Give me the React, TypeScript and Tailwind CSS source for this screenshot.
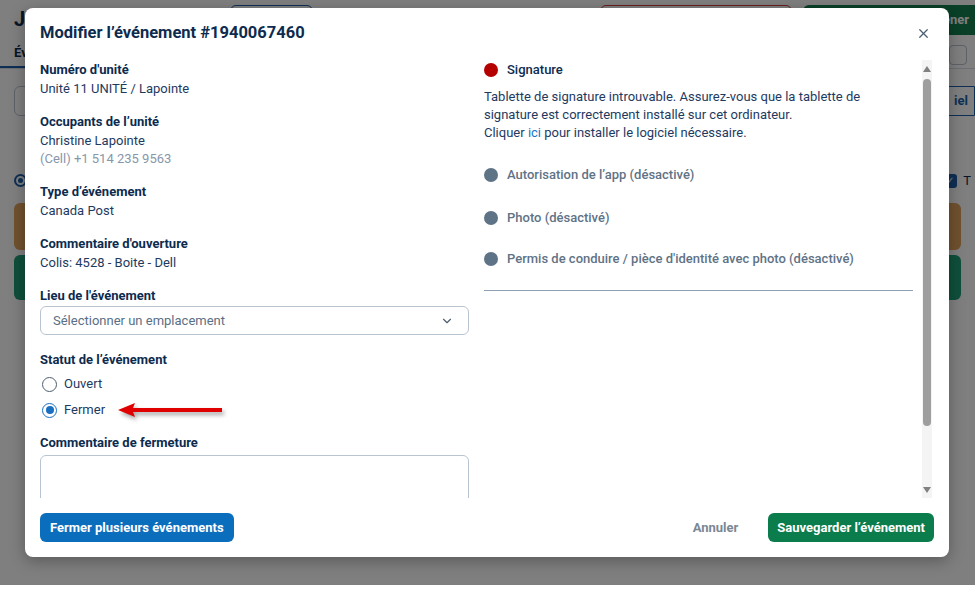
import { X, ChevronDown } from 'lucide-react';

function Field({ label, children }: { label: string; children: React.ReactNode }) {
    return (
        <div className="mb-[14px]">
            <div className="text-[13px] font-bold leading-[19px] text-[#0d2b4e]">{label}</div>
            {children}
        </div>
    );
}

function Radio({ label, checked }: { label: string; checked?: boolean }) {
    return (
        <div className="flex h-[26px] items-center">
            <span
                className={
                    checked
                        ? 'ml-[2px] flex h-[15px] w-[15px] items-center justify-center rounded-full border-[1.5px] border-[#1a6fc0]'
                        : 'ml-[2px] h-[15px] w-[15px] rounded-full border-[1.5px] border-[#4d5e70]'
                }
            >
                {checked && <span className="h-[8px] w-[8px] rounded-full bg-[#1a6fc0]" />}
            </span>
            <span className="ml-[7px] text-[13px] text-[#1e3a5f]">{label}</span>
            {checked && (
                <svg width="106" height="16" viewBox="0 0 106 16" className="ml-[13px] drop-shadow-[2px_3px_2px_rgba(0,0,0,0.35)]">
                    <path d="M0 8 L17 1 L15 6 L104 6 L104 10 L15 10 L17 15 Z" fill="#e00000" />
                </svg>
            )}
        </div>
    );
}

function Step({ label, color, text, className }: { label: string; color: string; text: string; className?: string }) {
    return (
        <div className={`flex h-[20px] items-center ${className ?? ''}`}>
            <span className={`h-[14px] w-[14px] rounded-full ${color}`} />
            <span className={`ml-[9px] text-[13px] font-medium ${text}`}>{label}</span>
        </div>
    );
}

function BackgroundPage() {
    return (
        <div className="flex h-[585px] flex-col">
            <div className="flex h-[42px] items-start pt-[5px] pl-[14px]">
                <h1 className="w-[216px] text-[20px] font-bold leading-[28px] text-[#0d2b4e]">J</h1>
                <div className="h-[30px] w-[83px] rounded-md border border-[#1d5fa8]" />
                <div className="flex-1" />
                <div className="h-[30px] w-[192px] rounded-md border border-[#d33a3a]" />
                <div className="ml-[11px] flex h-[30px] w-[172px] items-center overflow-hidden rounded-l-md bg-[#12804e] pl-[140px] text-[13px] font-bold whitespace-nowrap text-white">
                    éner
                </div>
            </div>
            <div className="flex h-[27px] items-end border-b border-[#d6dde5]">
                <div className="border-b-2 border-[#1d5fa8] pb-[4px] pl-[14px] pr-[10px] text-[13px] font-bold text-[#0d2b4e]">Év</div>
                <div className="flex-1" />
                <div className="mr-[8px] mb-[3px] h-[20px] w-[18px] rounded border border-[#b8c4d0]" />
            </div>
            <div className="flex items-center px-[14px] pt-[17px]">
                <div className="h-[30px] w-[220px] rounded-md border border-[#b8c4d0]" />
                <div className="flex-1" />
                <div className="mr-[-14px] flex h-[30px] w-[40px] items-center justify-end rounded-l-md border border-[#1d5fa8] pr-[6px] text-[13px] font-bold text-[#1d5fa8]">
                    iel
                </div>
            </div>
            <div className="flex items-center px-[14px] pt-[55px]">
                <span className="flex h-[13px] w-[13px] items-center justify-center rounded-full border-2 border-[#1d5fa8]">
                    <span className="h-[5px] w-[5px] rounded-full bg-[#1d5fa8]" />
                </span>
                <div className="flex-1" />
                <span className="mr-[6px] flex h-[14px] w-[14px] items-center justify-center rounded-[3px] bg-[#1d5fa8] text-[10px] text-white">✓</span>
                <span className="mr-[-10px] text-[13px] text-[#0d2b4e]">T</span>
            </div>
            <div className="mx-[14px] mt-[12px] h-[47px] rounded-md bg-[#e0a35c]" />
            <div className="mx-[14px] mt-[5px] h-[45px] rounded-md bg-[#1f9e77]" />
        </div>
    );
}

function Modal() {
    return (
        <div className="flex h-[549px] w-[924px] flex-col rounded-lg bg-white shadow-[0_4px_16px_rgba(0,0,0,0.3)]">
            <div className="flex h-[52px] items-start justify-between pl-[15px] pr-[18px] pt-[14px]">
                <h2 className="text-[16.5px] font-bold leading-[22px] text-[#0d2b4e]">Modifier l’événement #1940067460</h2>
                <X className="mt-[4px] h-[15px] w-[15px] text-[#4d5e70]" strokeWidth={2} />
            </div>

            <div className="flex h-[438px] overflow-hidden px-[15px]">
                <div className="w-[429px] shrink-0">
                    <Field label="Numéro d'unité">
                        <div className="text-[13px] leading-[19px] text-[#1e3a5f]">Unité 11 UNITÉ / Lapointe</div>
                    </Field>
                    <Field label="Occupants de l’unité">
                        <div className="text-[13px] leading-[19px] text-[#1e3a5f]">Christine Lapointe</div>
                        <div className="text-[13px] leading-[18px] text-[#8797ab]">(Cell) +1 514 235 9563</div>
                    </Field>
                    <Field label="Type d’événement">
                        <div className="text-[13px] leading-[19px] text-[#1e3a5f]">Canada Post</div>
                    </Field>
                    <Field label="Commentaire d'ouverture">
                        <div className="text-[13px] leading-[19px] text-[#1e3a5f]">Colis: 4528 - Boite - Dell</div>
                    </Field>
                    <div className="text-[13px] font-bold leading-[19px] text-[#0d2b4e]">Lieu de l'événement</div>
                    <div className="mt-[1px] flex h-[29px] items-center justify-between rounded-md border border-[#b8c4d0] pl-[12px] pr-[14px]">
                        <span className="text-[13px] text-[#5a6f85]">Sélectionner un emplacement</span>
                        <ChevronDown className="h-[14px] w-[14px] text-[#4d5e70]" strokeWidth={2} />
                    </div>
                    <div className="mt-[15px] text-[13px] font-bold leading-[19px] text-[#0d2b4e]">Statut de l’événement</div>
                    <div className="mt-[2px]">
                        <Radio label="Ouvert" />
                        <Radio label="Fermer" checked />
                    </div>
                    <div className="mt-[10px] text-[13px] font-bold leading-[19px] text-[#0d2b4e]">Commentaire de fermeture</div>
                    <textarea className="mt-[3px] block h-[60px] w-full rounded-md border border-[#b8c4d0]" />
                </div>

                <div className="ml-[15px] w-[429px] shrink-0">
                    <Step label="Signature" color="bg-[#b50000]" text="text-[#0d2b4e]" />
                    <p className="mt-[8px] text-[13px] leading-[18px] text-[#1e3a5f]">
                        Tablette de signature introuvable. Assurez-vous que la tablette de signature est correctement installé sur cet ordinateur.
                        <br />
                        Cliquer <span className="text-[#1a73c8]">ici</span> pour installer le logiciel nécessaire.
                    </p>
                    <Step className="mt-[23px]" label="Autorisation de l’app (désactivé)" color="bg-[#5f7386]" text="text-[#5f7386]" />
                    <Step className="mt-[23px]" label="Photo (désactivé)" color="bg-[#5f7386]" text="text-[#5f7386]" />
                    <Step className="mt-[21px]" label="Permis de conduire / pièce d'identité avec photo (désactivé)" color="bg-[#5f7386]" text="text-[#5f7386]" />
                    <div className="mt-[21px] h-px bg-[#8fa0b2]" />
                </div>

                <div className="ml-[9px] flex w-[10px] shrink-0 flex-col items-center bg-[#f4f4f4]">
                    <svg width="8" height="6" viewBox="0 0 8 6" className="mt-[6px]">
                        <path d="M4 0 L8 6 L0 6 Z" fill="#808080" />
                    </svg>
                    <div className="mt-[7px] h-[347px] w-[8px] rounded-full bg-[#9e9e9e]" />
                    <div className="flex-1" />
                    <svg width="8" height="6" viewBox="0 0 8 6" className="mb-[5px]">
                        <path d="M0 0 L8 0 L4 6 Z" fill="#808080" />
                    </svg>
                </div>
            </div>

            <div className="flex h-[59px] items-center justify-between px-[15px]">
                <button className="h-[29px] rounded-md bg-[#0a6ebd] px-[10px] text-[13px] font-bold text-white">Fermer plusieurs événements</button>
                <div className="flex items-center">
                    <button className="mr-[30px] text-[13px] font-bold text-[#7a8794]">Annuler</button>
                    <button className="h-[29px] rounded-md bg-[#0b7c4c] px-[9px] text-[13px] font-bold text-white">Sauvegarder l’événement</button>
                </div>
            </div>
        </div>
    );
}

export default function App() {
    return (
        <div className="relative h-[591px] w-[975px] overflow-hidden bg-white font-['Roboto',sans-serif]">
            <BackgroundPage />
            <div className="absolute inset-x-0 top-0 h-[585px] bg-black/50 pl-[25px] pt-[8px]">
                <Modal />
            </div>
        </div>
    );
}
